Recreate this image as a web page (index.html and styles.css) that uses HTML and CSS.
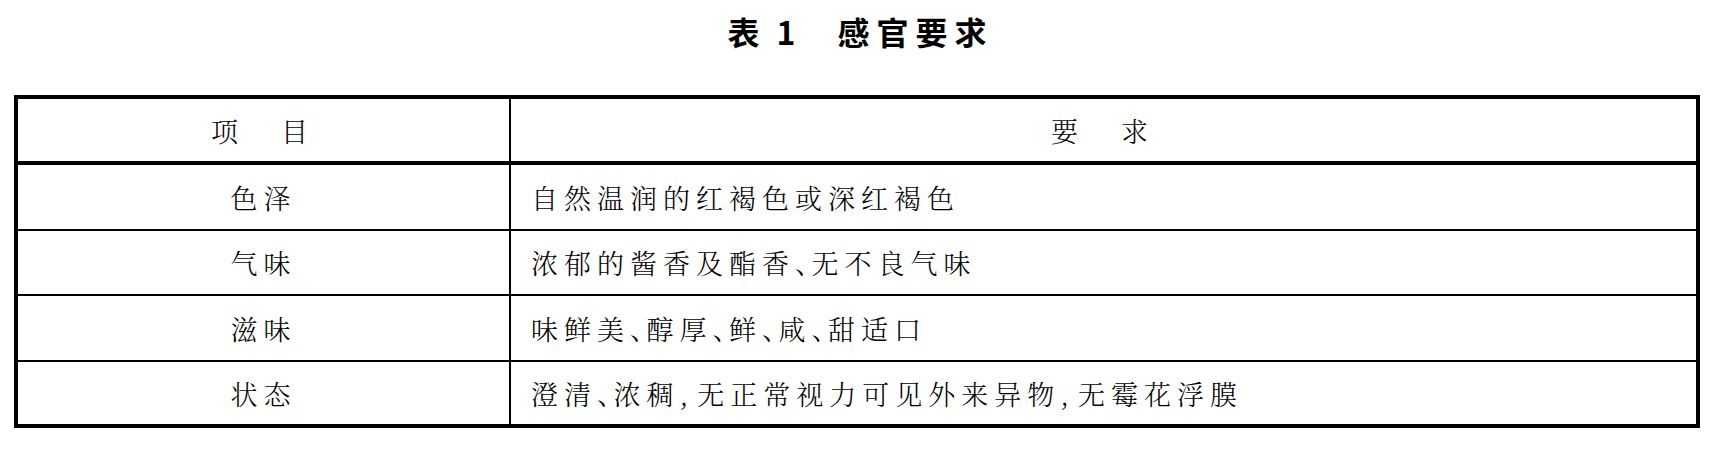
FILE: index.html
```html
<!DOCTYPE html>
<html lang="zh-CN">
<head>
<meta charset="utf-8">
<title>表 1 感官要求</title>
<link rel="stylesheet" href="styles.css">
</head>
<body>
<div class="page">
  <h1 class="title"><span class="t-no">表<span class="t-sp"></span>1</span><span class="t-name">感官要求</span></h1>
  <div class="table">
    <div class="row head">
      <div class="cell c1 hd">项　目</div>
      <div class="cell c2 hd center">要　求</div>
    </div>
    <div class="row r1">
      <div class="cell c1">色泽</div>
      <div class="cell c2">自然温润的红褐色或深红褐色</div>
    </div>
    <div class="row r2">
      <div class="cell c1">气味</div>
      <div class="cell c2">浓郁的酱香及酯香<span class="dun">、</span>无不良气味</div>
    </div>
    <div class="row r3">
      <div class="cell c1">滋味</div>
      <div class="cell c2">味鲜美<span class="dun">、</span>醇厚<span class="dun">、</span>鲜<span class="dun">、</span>咸<span class="dun">、</span>甜适口</div>
    </div>
    <div class="row r4">
      <div class="cell c1">状态</div>
      <div class="cell c2">澄清<span class="dun">、</span>浓稠<span class="cm">,</span>无正常视力可见外来异物<span class="cm">,</span>无霉花浮膜</div>
    </div>
  </div>
</div>
</body>
</html>
```
FILE: styles.css
```css
html, body {
  margin: 0;
  padding: 0;
  background: #fff;
}

.page {
  width: 1686px;
  margin-left: 14px;
  color: #000;
}

.title {
  margin: 0;
  height: 95px;
  box-sizing: border-box;
  padding-top: 13px;
  text-align: center;
  font-family: "Noto Sans CJK SC", "Noto Sans", sans-serif;
  font-size: 32px;
  line-height: 36px;
  font-weight: 700;
}

.t-no {
  letter-spacing: 0;
}

.t-sp {
  display: inline-block;
  width: 17px;
}

.t-name {
  margin-left: 42px;
  letter-spacing: 7px;
  margin-right: -7px;
}

.table {
  border: 4px solid #000;
  font-family: "Noto Serif CJK SC", "Noto Sans CJK SC", serif;
  font-size: 27px;
  font-weight: 300;
  letter-spacing: 6px;
}

.row {
  display: grid;
  grid-template-columns: 491px 1fr;
}

.head {
  height: 62px;
  border-bottom: 4px solid #000;
}

.r1 { height: 64px; }
.r2, .r3, .r4 {
  border-top: 2px solid #000;
}
.r2 { height: 63px; }
.r3 { height: 64px; }
.r4 { height: 62px; }

.cell {
  display: flex;
  align-items: center;
  white-space: nowrap;
}

.c1 {
  justify-content: center;
}

.c2 {
  border-left: 2px solid #000;
  padding-left: 20px;
}

.c2.center {
  justify-content: center;
  padding-left: 0;
}

.hd {
  letter-spacing: 8px;
}

.dun {
  font-feature-settings: "halt" 1;
  letter-spacing: 3px;
}

.cm {
  letter-spacing: 0;
  margin-right: 9px;
}
```
